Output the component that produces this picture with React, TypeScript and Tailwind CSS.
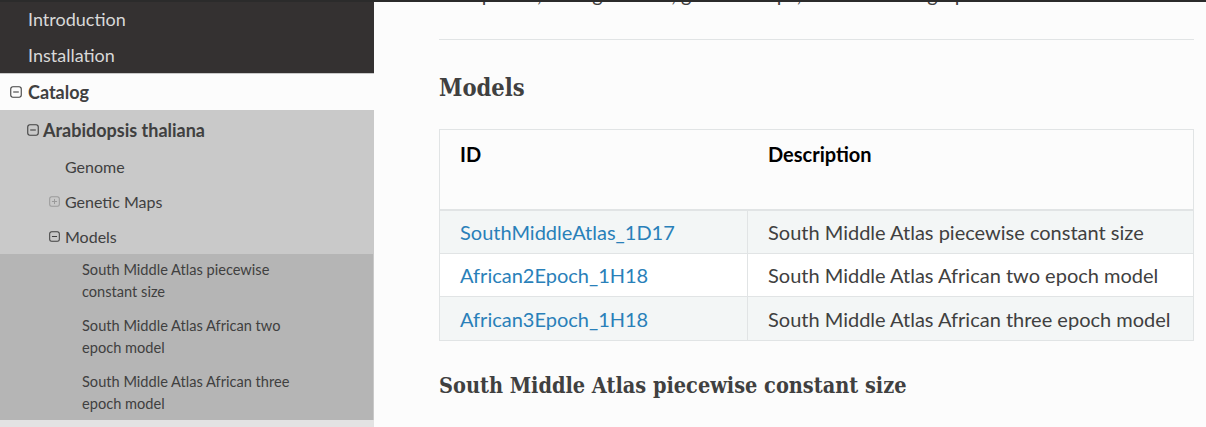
import React from 'react';

const sans = { fontFamily: 'Lato, "Noto Sans", sans-serif' };
const slab = { fontFamily: '"Roboto Slab", "DejaVu Serif Condensed", "DejaVu Serif", serif' };

const BoxIcon = ({ plus = false, className = '' }: { plus?: boolean; className?: string }) => (
  <svg viewBox="0 0 12 12" className={className} fill="none" stroke="currentColor">
    <rect x="0.75" y="0.75" width="10.5" height="10.5" rx="2.2" strokeWidth="1.1" />
    <path d="M3.2 6h5.6" strokeWidth="1.1" />
    {plus && <path d="M6 3.2v5.6" strokeWidth="1.1" />}
  </svg>
);

const models = [
  {
    id: 'SouthMiddleAtlas_1D17',
    desc: 'South Middle Atlas piecewise constant size',
    nav: ['South Middle Atlas piecewise', 'constant size'],
  },
  {
    id: 'African2Epoch_1H18',
    desc: 'South Middle Atlas African two epoch model',
    nav: ['South Middle Atlas African two', 'epoch model'],
  },
  {
    id: 'African3Epoch_1H18',
    desc: 'South Middle Atlas African three epoch model',
    nav: ['South Middle Atlas African three', 'epoch model'],
  },
];

const Sidebar: React.FC = () => {
  return (
    <nav className="w-[374px] shrink-0 bg-[#343131] text-[18px]" style={sans}>
      <div className="h-[35px] flex items-center pl-[28px] text-[#d9d9d9]">Introduction</div>
      <div className="h-[36px] flex items-center pl-[28px] text-[#d9d9d9]">Installation</div>

      {/* current section */}
      <div className="bg-[#e3e3e3] pb-[7px]">
        <div className="h-[38px] flex items-center bg-[#fcfcfc] border-y border-[#c9c9c9] text-[#404040] font-bold">
          <BoxIcon className="w-[12px] h-[12px] ml-[10px] mr-[6px] text-[#404040]" />
          Catalog
        </div>
        <div className="border-r border-[#c9c9c9] bg-[#c9c9c9] text-[#404040]">
          <div className="h-[38px] flex items-center font-bold">
            <BoxIcon className="w-[12px] h-[12px] ml-[27px] mr-[4px] text-[#404040]" />
            Arabidopsis thaliana
          </div>
          <div className="h-[35px] flex items-center pl-[65px] text-[16px]">Genome</div>
          <div className="h-[35px] flex items-center text-[16px]">
            <BoxIcon plus className="w-[11px] h-[11px] ml-[49px] mr-[5px] text-[#9a9a9a]" />
            Genetic Maps
          </div>
          <div className="h-[35px] flex items-center text-[16px]">
            <BoxIcon className="w-[11px] h-[11px] ml-[49px] mr-[5px] text-[#404040]" />
            Models
          </div>
        </div>
        <div className="bg-[#b5b5b5] border-r border-[#c9c9c9] text-[#404040] text-[14.6px] leading-[22px] py-[5px]">
          {models.map((m) => (
            <div key={m.id} className="pl-[82px] pb-[12px] last:pb-0">
              <div>{m.nav[0]}</div>
              <div>{m.nav[1]}</div>
            </div>
          ))}
        </div>
      </div>
    </nav>
  );
};

const App: React.FC = () => {
  return (
    <div className="w-[1206px] h-[427px] overflow-hidden flex flex-col bg-[#fcfcfc]">
      <div className="h-[2px] shrink-0 bg-[#2b2b2b]" />
      <div className="flex flex-1 min-h-0">
        <Sidebar />

        <main className="flex-1 pl-[65px] pr-[12px] text-[#404040]" style={sans}>
          {/* tail of the paragraph scrolled out of view */}
          <div className="h-[5px] overflow-hidden flex flex-col justify-end">
            <p className="text-[20px] leading-[26px] whitespace-nowrap">
              the species, their genomes, genetic maps, and the demographic models
            </p>
          </div>
          <div className="mt-[32px] border-t border-[#e1e4e5]" />

          <h2 className="mt-[33px] text-[23.5px] font-bold leading-[30px] text-[#404040]" style={slab}>
            Models
          </h2>

          <div className="mt-[26px] border border-[#e1e4e5] text-[20px]">
            <div className="h-[81px] grid grid-cols-[308px_1fr] border-b-2 border-[#e1e4e5] font-bold text-[#000]">
              <div className="pl-[20px] pt-[9px]">ID</div>
              <div className="pl-[20px] pt-[9px]">Description</div>
            </div>
            {models.map((m, i) => (
              <div
                key={m.id}
                className={`h-[43px] grid grid-cols-[308px_1fr] items-center ${
                  i % 2 === 0 ? 'bg-[#f3f6f6]' : 'bg-white'
                } ${i < models.length - 1 ? 'border-b border-[#e1e4e5]' : ''}`}
              >
                <div className="pl-[20px] h-full flex items-center border-r border-[#e1e4e5] text-[#2980b9]">
                  {m.id}
                </div>
                <div className="pl-[20px]">{m.desc}</div>
              </div>
            ))}
          </div>

          <h3 className="mt-[31px] text-[21.5px] font-bold leading-[28px]" style={slab}>
            South Middle Atlas piecewise constant size
          </h3>
        </main>
      </div>
    </div>
  );
};

export default App;
